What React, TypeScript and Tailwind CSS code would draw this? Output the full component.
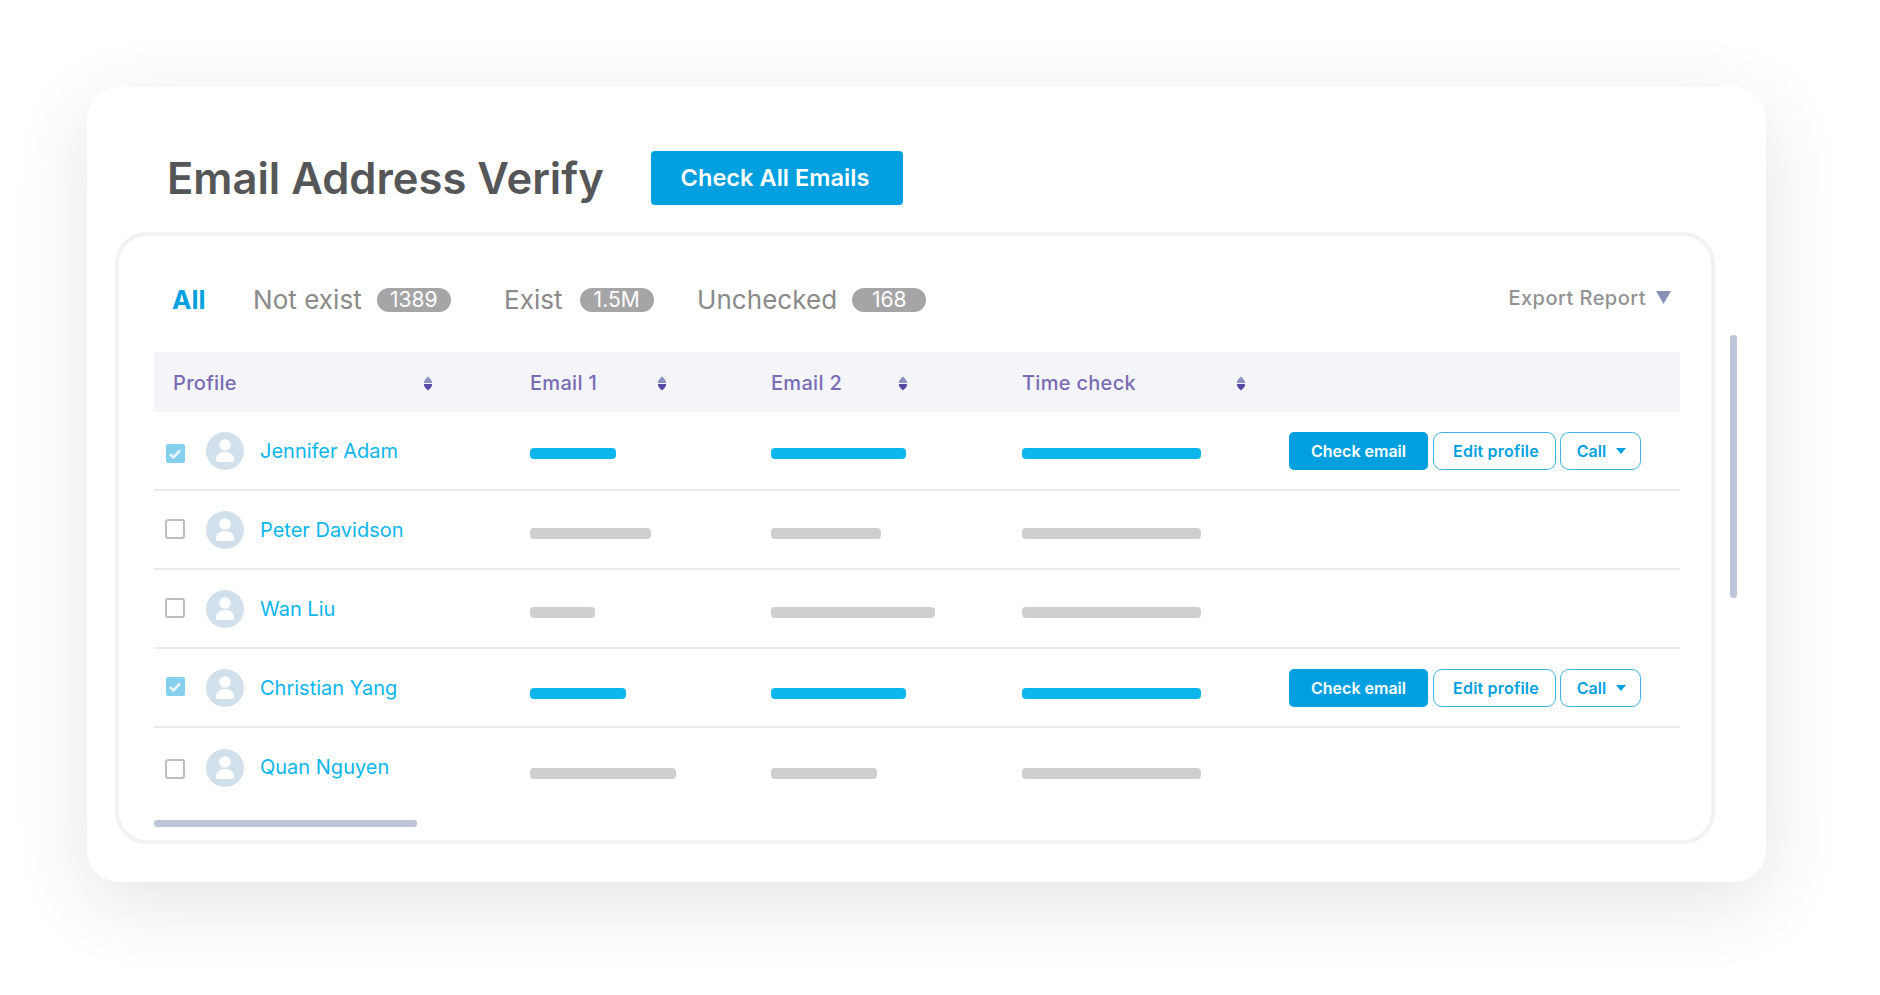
import React from "react";

const ff = { fontFamily: "Inter, 'Liberation Sans', sans-serif" };

function SortIcon() {
  return (
    <svg width="8" height="15" viewBox="0 0 8 15" className="block translate-y-[1px]">
      <path d="M4 0.5 C5 1.5 8 4 8 6.5 V7 H0 V6.5 C0 4 3 1.5 4 0.5 Z" fill="#8a90c0" />
      <path d="M0 8 H8 V9 C8 11 5.5 13 4 14.5 C2.5 13 0 11 0 9 Z" fill="#5b47a5" />
    </svg>
  );
}

function Avatar() {
  return (
    <div className="w-[38px] h-[38px] rounded-full bg-[#d2e0ec] flex items-center justify-center shrink-0">
      <svg width="38" height="38" viewBox="0 0 38 38">
        <circle cx="19" cy="13" r="5.8" fill="#fff" />
        <path d="M10 27.5 C10 22.5 14 20 19 20 S28 22.5 28 27.5 Q28 30 26 30 H12 Q10 30 10 27.5 Z" fill="#fff" />
      </svg>
    </div>
  );
}

function Check({ on }: { on: boolean }) {
  if (on)
    return (
      <div className="w-[19px] h-[19px] rounded-[2px] bg-[#85d0ef] flex items-center justify-center">
        <svg width="14" height="12" viewBox="0 0 14 12">
          <path d="M2 6 L5.5 9.5 L12 2.5" stroke="#e9f5fb" strokeWidth="2.6" fill="none" />
        </svg>
      </div>
    );
  return <div className="w-[20px] h-[20px] rounded-[3px] border-2 border-[#bdbdbd] bg-white" />;
}

function Bar({ w, on }: { w: number; on: boolean }) {
  return <div className={`h-[11px] rounded-[4px] ${on ? "bg-[#0cb6ec]" : "bg-[#cfcfcf]"}`} style={{ width: w }} />;
}

const rows = [
  { name: "Jennifer Adam", on: true, b: [86, 135, 179], ckY: "translate-y-[3px]", barY: "translate-y-[3px]", nameY: "" },
  { name: "Peter Davidson", on: false, b: [121, 110, 179], ckY: "-translate-y-[1px]", barY: "translate-y-[4px]", nameY: "" },
  { name: "Wan Liu", on: false, b: [65, 164, 179], ckY: "-translate-y-[1px]", barY: "translate-y-[4px]", nameY: "" },
  { name: "Christian Yang", on: true, b: [96, 135, 179], ckY: "-translate-y-[1px]", barY: "translate-y-[6px]", nameY: "" },
  { name: "Quan Nguyen", on: false, b: [146, 106, 179], ckY: "translate-y-[1px]", barY: "translate-y-[6px]", nameY: "-translate-y-[1px]" },
];

const cols = "grid grid-cols-[376px_241px_251px_267px_1fr] items-center";

function Tab({ label, badge, gap, ml }: { label: string; badge: string; gap: string; ml: string }) {
  return (
    <div className={`flex items-center ${gap}`}>
      <span className="text-[26px] text-[#8a8a8a] tracking-[0.05px]">{label}</span>
      <span className={`${ml} h-[24px] w-[74px] rounded-full bg-[#a5a4a6] text-white text-[21px] flex items-center justify-center`}>
        {badge}
      </span>
    </div>
  );
}

export default function App() {
  return (
    <div className="w-[1880px] h-[995px] bg-white overflow-hidden pt-[87px] pl-[87px]" style={ff}>
      <div className="relative w-[1679px] h-[795px] rounded-[32px] bg-white shadow-[0_20px_80px_rgba(0,0,0,0.11)]">
        <div className="flex items-center pl-[80px] pt-[62px] h-[145px] pb-[25px]">
          <h1 className="text-[43.5px] font-semibold text-[#555657] w-[484px] leading-none whitespace-nowrap translate-y-[1px]">Email Address Verify</h1>
          <button className="w-[252px] h-[54px] rounded-[4px] bg-[#009fdf] text-white text-[23.5px] font-semibold tracking-[0.05px] pr-[4px]">Check All Emails</button>
        </div>
        <div className="ml-[28px] w-[1600px] h-[612px] rounded-[32px] border-4 border-[#f2f2f2] pl-[35px] pr-[31px] flex flex-col">
          <div className="h-[116px] shrink-0 flex items-center pl-[18px] pr-[9px] pt-[11px]">
            <span className="text-[26px] font-bold text-[#009fdf] w-[81px]">All</span>
            <Tab label="Not exist" badge="1389" gap="w-[251px]" ml="ml-[15px]" />
            <Tab label="Exist" badge="1.5M" gap="w-[193px]" ml="ml-[17px]" />
            <Tab label="Unchecked" badge="168" gap="" ml="ml-[15px]" />
            <div className="ml-auto flex items-center gap-[10px] -translate-y-[2px]">
              <span className="text-[20px] font-medium text-[#929292] tracking-[0.45px]">Export Report</span>
              <svg width="15" height="13" viewBox="0 0 15 13"><path d="M0 0 H15 L7.5 13 Z" fill="#8990b8" /></svg>
            </div>
          </div>
          <div className={`${cols} h-[60px] shrink-0 bg-[#f4f5f9] text-[#7a6cb5] text-[20px] font-medium tracking-[0.3px]`}>
            <div className="pl-[19px] pr-[98px] flex justify-between items-center"><span className="translate-y-[1px]">Profile</span><SortIcon /></div>
            <div className="pr-[105px] flex justify-between items-center"><span className="translate-y-[1px]">Email 1</span><SortIcon /></div>
            <div className="pr-[115px] flex justify-between items-center"><span className="translate-y-[1px]">Email 2</span><SortIcon /></div>
            <div className="pr-[44px] flex justify-between items-center"><span className="translate-y-[1px]">Time check</span><SortIcon /></div>
            <div />
          </div>
          {rows.map((r, i) => (
            <div key={r.name} className={`${cols} h-[79px] shrink-0 ${i < 4 ? "border-b-2 border-[#ebebeb]" : ""}`}>
              <div className="flex items-center pl-[11px]">
                <div className={`w-[20px] flex justify-center ${r.ckY}`}><Check on={r.on} /></div>
                <div className="ml-[21px]"><Avatar /></div>
                <span className={`ml-[16px] text-[20px] text-[#0cb6ec] whitespace-nowrap ${r.nameY}`}>{r.name}</span>
              </div>
              {r.b.map((w, j) => (
                <div key={j} className={r.barY}><Bar w={w} on={r.on} /></div>
              ))}
              {r.on ? (
                <div className="flex items-center">
                  <button className="w-[139px] h-[38px] rounded-[5px] bg-[#009fdf] text-white text-[16px] font-semibold">Check email</button>
                  <button className="ml-[5px] w-[123px] h-[38px] pl-[3px] rounded-[9px] border border-[#3fb3e5] text-[#009fdf] text-[16px] font-semibold tracking-[0.2px]">Edit profile</button>
                  <button className="ml-[4px] w-[81px] h-[38px] pl-[2px] rounded-[9px] border border-[#3fb3e5] text-[#009fdf] text-[16px] font-semibold flex items-center justify-center gap-[10px]">
                    Call
                    <svg width="10" height="6" viewBox="0 0 10 6"><path d="M0 0 H10 L5 6 Z" fill="#009fdf" /></svg>
                  </button>
                </div>
              ) : (
                <div />
              )}
            </div>
          ))}
          <div className="w-[263px] h-[7px] mt-[13px] rounded-[3px] bg-[#bfc5d9] shrink-0" />
        </div>
        <div className="absolute left-[1643px] top-[248px] w-[7px] h-[263px] rounded-[3px] bg-[#bfc5d9]" />
      </div>
    </div>
  );
}
